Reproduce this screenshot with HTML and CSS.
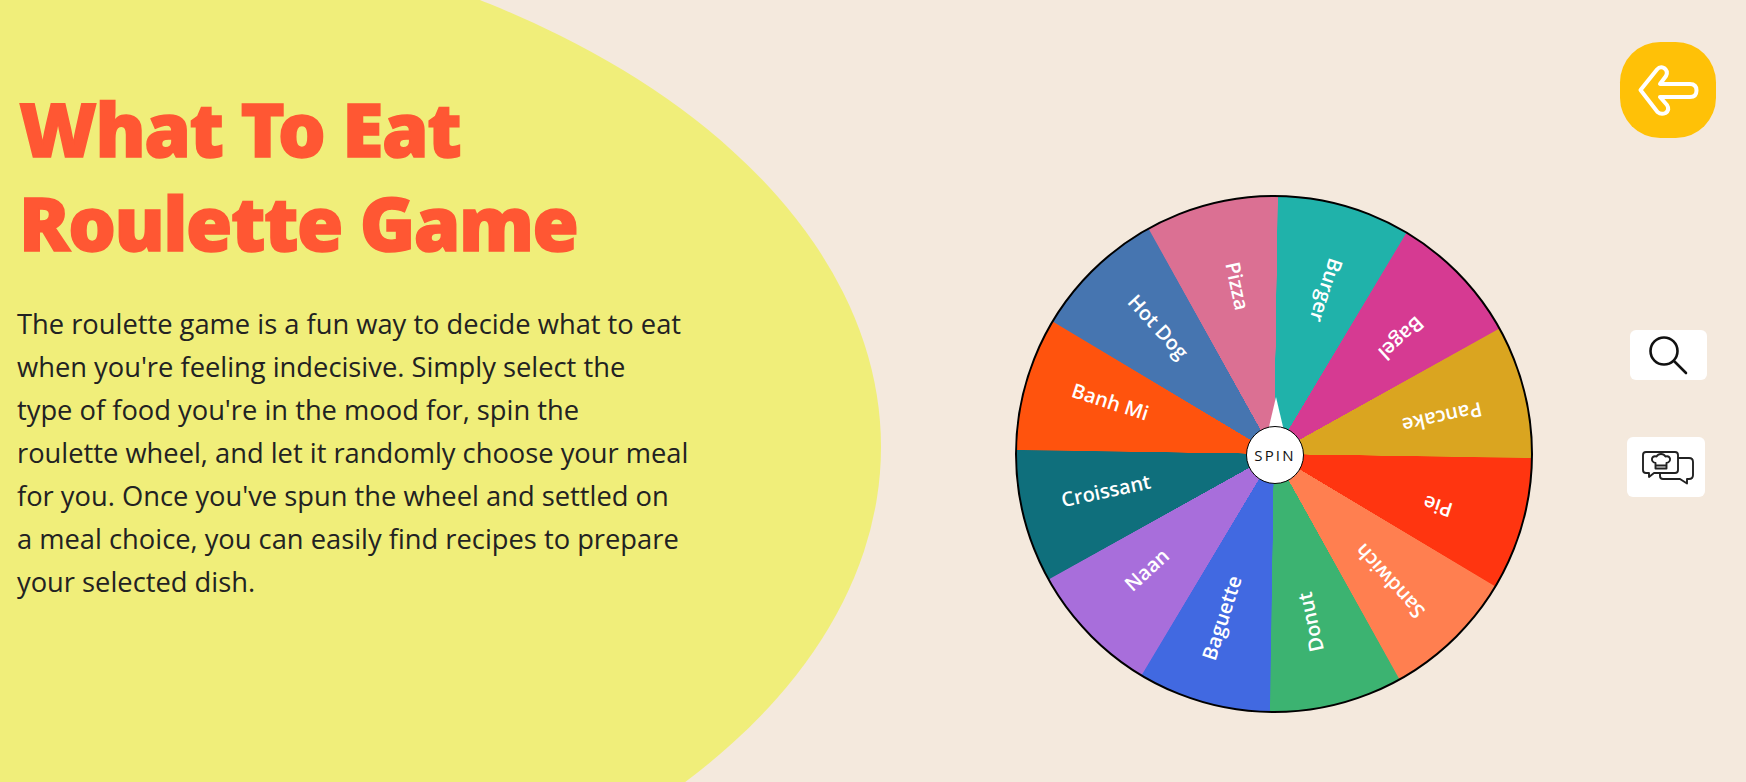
FILE: index.html
```html
<!DOCTYPE html>
<html lang="en">

<head>
  <meta charset="UTF-8">
  <title>What To Eat Roulette Game</title>
  <link rel="stylesheet" href="styles.css">
</head>

<body>
  <main class="page">
    <div class="blob"></div>

    <section class="intro">
      <h1 class="title">What To Eat<br>Roulette Game</h1>
      <p class="blurb">The roulette game is a fun way to decide what to eat<br>
        when you're feeling indecisive. Simply select the<br>
        type of food you're in the mood for, spin the<br>
        roulette wheel, and let it randomly choose your meal<br>
        for you. Once you've spun the wheel and settled on<br>
        a meal choice, you can easily find recipes to prepare<br>
        your selected dish.</p>
    </section>

    <section class="wheel-area">
      <div class="wheel">
        <span class="wheel-label" style="--a: 17.8deg">Burger</span>
        <span class="wheel-label" style="--a: 47.8deg">Bagel</span>
        <span class="wheel-label" style="--a: 77.8deg">Pancake</span>
        <span class="wheel-label" style="--a: 107.8deg">Pie</span>
        <span class="wheel-label" style="--a: 137.8deg">Sandwich</span>
        <span class="wheel-label" style="--a: 167.8deg">Donut</span>
        <span class="wheel-label" style="--a: 197.8deg">Baguette</span>
        <span class="wheel-label" style="--a: 227.8deg">Naan</span>
        <span class="wheel-label" style="--a: 257.8deg">Croissant</span>
        <span class="wheel-label" style="--a: 287.8deg">Banh Mi</span>
        <span class="wheel-label" style="--a: 317.8deg">Hot Dog</span>
        <span class="wheel-label" style="--a: 347.8deg">Pizza</span>
        <div class="wheel-pointer"></div>
        <button class="wheel-spin">SPIN</button>
      </div>
    </section>

    <nav class="side">
      <button class="back-btn" aria-label="Back">
        <svg width="96" height="96" viewBox="0 0 96 96" fill="none" stroke="#fff" stroke-width="4" stroke-linejoin="round">
          <path d="M20.500 48 L37 27.500 Q40 24 44 26 Q48.500 29 46 34 L40 42 H70 Q76.500 42 76.500 48.500 Q76.500 55 70 55 H40 L47 63 Q50 68 45.500 71 Q41 73 37.500 70 Z" />
        </svg>
      </button>
      <div class="side-tools">
        <button class="tool-btn tool-search" aria-label="Search">
          <svg width="77" height="50" viewBox="0 0 77 50" fill="none" stroke="#111" stroke-width="2.6" stroke-linecap="round">
            <circle cx="34" cy="21" r="13.5" />
            <path d="M44 31 L56 43" />
          </svg>
        </button>
        <button class="tool-btn tool-chat" aria-label="Recipes">
          <svg width="78" height="60" viewBox="1 0 78 60" fill="none" stroke="#222" stroke-width="1.9" stroke-linejoin="round">
            <path d="M20 15 H49 Q52 15 52 18 V33 Q52 36 49 36 H28 L23 40 V36 H20 Q17 36 17 33 V18 Q17 15 20 15 Z" />
            <path d="M52 21 H63 Q67 21 67 25 V38 Q67 42 63 42 H61 V46.500 L54 42 H37 Q34 42 34 39 V36" />
            <path d="M29.500 31.500 V26 Q25.500 25 26 21.500 Q27 18.500 30.500 19.500 Q32 17 35 17 Q38 17 39.500 19.500 Q43 18.500 44 21.500 Q44.500 25 40.500 26 V31.500 Z M29.500 28.500 H40.500" />
          </svg>
        </button>
      </div>
    </nav>
  </main>
</body>

</html>
```

FILE: styles.css
```css
body {
  margin: 0;
  background-color: #f4e9dd;
  font-family: 'Open Sans', sans-serif;
  color: #222;
}

.page {
  position: relative;
  display: flex;
  height: 100vh;
  overflow: hidden;
}

/* big yellow shape behind the intro */
.blob {
  position: absolute;
  left: -881px;
  top: -86px;
  width: 1762px;
  height: 1066px;
  border-radius: 50%;
  background-color: #f0ee7a;
}

.intro {
  position: relative;
  flex: none;
  width: 700px;
  padding: 81px 0 0 17px;
  box-sizing: border-box;
}

.title {
  margin: 0 0 33px 2px;
  font-family: 'Noto Sans', sans-serif;
  font-size: 75px;
  line-height: 94px;
  font-weight: 900;
  letter-spacing: -1.500px;
  -webkit-text-stroke: 1.500px #ff5733; /* no black weight installed, thicken it */
  color: #ff5733;
}

.blurb {
  margin: 0;
  font-size: 27.300px;
  line-height: 43px;
  white-space: nowrap;
}

.wheel-area {
  position: relative;
  flex: none;
  width: 877px;
  padding: 195px 0 0 315px;
  box-sizing: border-box;
}

.wheel {
  position: relative;
  width: 518px;
  height: 518px;
  box-sizing: border-box;
  border: 2px solid #000;
  border-radius: 50%;
  background: conic-gradient(from 0.9deg,
      #20b2aa 0 29.900deg,
      #d63a92 30.100deg 59.900deg,
      #daa520 60.100deg 89.900deg,
      #ff3510 90.100deg 119.900deg,
      #ff7f50 120.100deg 149.900deg,
      #3cb371 150.100deg 179.900deg,
      #4169e1 180.100deg 209.900deg,
      #a86edb 210.100deg 239.900deg,
      #0f6f7c 240.100deg 269.900deg,
      #ff530d 270.100deg 299.900deg,
      #4675b0 300.100deg 329.900deg,
      #db7093 330.100deg 359.900deg,
      #20b2aa 360deg);
}

.wheel-label {
  position: absolute;
  left: 50%;
  top: 50%;
  color: #fff;
  font-size: 20px;
  font-weight: 600;
  white-space: nowrap;
  transform: translate(-50%, -50%) rotate(var(--a)) translateY(-172px) rotate(90deg);
}

.wheel-pointer {
  position: absolute;
  left: 50%;
  top: 50%;
  width: 0;
  height: 0;
  margin: -57px 0 0 -6.500px;
  border-left: 8px solid transparent;
  border-right: 8px solid transparent;
  border-bottom: 34px solid #fff;
}

.wheel-spin {
  position: absolute;
  left: 50%;
  top: 50%;
  width: 58px;
  height: 58px;
  margin: -28px 0 0 -28px;
  padding: 0;
  border: 1.500px solid #000;
  border-radius: 50%;
  background-color: #fff;
  color: #111;
  font-family: inherit;
  font-size: 15px;
  letter-spacing: 2.200px;
}

.side {
  position: relative;
  flex: 1;
  display: flex;
  flex-direction: column;
  align-items: flex-end;
  padding: 42px 30px 0 0;
}

.back-btn {
  width: 96px;
  height: 96px;
  padding: 0;
  border: none;
  border-radius: 42%;
  background-color: #ffc107;
}

.back-btn svg,
.tool-btn svg {
  display: block;
}

.side-tools {
  display: flex;
  flex-direction: column;
  align-items: flex-end;
  gap: 57px;
  margin: 192px 9px 0 0;
}

.tool-btn {
  padding: 0;
  border: none;
  border-radius: 6px;
  background-color: #fff;
}

.tool-chat {
  margin-right: 2px;
}
```
